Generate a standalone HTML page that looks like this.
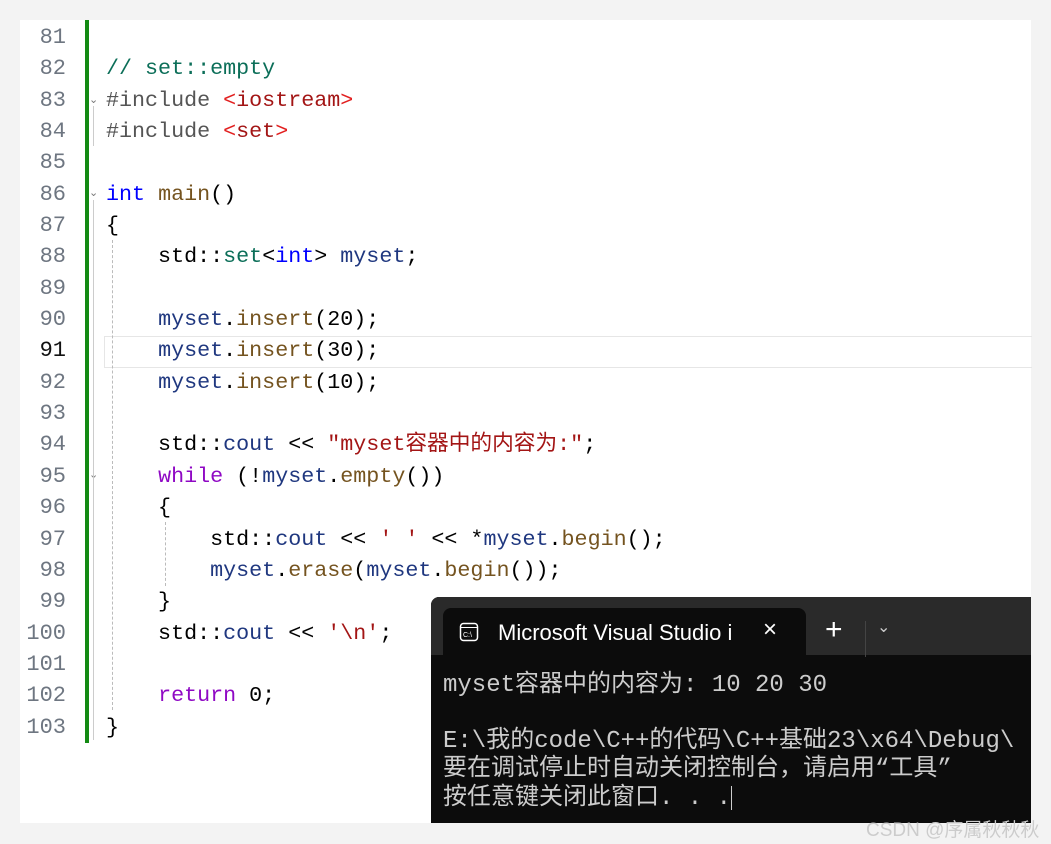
<!DOCTYPE html><html><head><meta charset="utf-8"><style>
body{margin:0;width:1051px;height:844px;background:#f3f3f3;position:relative;overflow:hidden;font-family:"Liberation Mono","Noto Sans CJK SC",monospace}
.card{position:absolute;left:20px;top:20px;width:1011px;height:803px;background:#fff}
.ln{position:absolute;left:20px;width:46px;text-align:right;color:#6e7681;font-size:22px;line-height:31.35px}
.bar{position:absolute;left:85px;top:20px;width:4px;height:723px;background:#138a13}
.code{position:absolute;left:106px;top:22px;font-size:21.7px;line-height:31.35px;white-space:pre;color:#000}
.c{color:#0b6e58}.k{color:#0000ff}.p{color:#8f08c4}.s{color:#a31515}.r{color:#e21f1f}.f{color:#74531f}.v{color:#1f377f}
.cur{position:absolute;left:104px;top:336px;width:927px;height:30px;border:1px solid #e6e6e6;border-right:none}
.fold{position:absolute;left:89px;color:#777;font-size:11px;font-family:"DejaVu Sans"}
.g{position:absolute;border-left:1px dashed #bbb}
.term{position:absolute;left:431px;top:597px;width:600px;height:226px;background:#0c0c0c;border-radius:8px 0 0 0;overflow:hidden}
.tabbar{position:absolute;left:0;top:0;width:600px;height:58px;background:#2a2a2a}
.tab{position:absolute;left:12px;top:11px;width:363px;height:50px;background:#0c0c0c;border-radius:8px 8px 0 0;color:#fff;font-family:"Liberation Sans","DejaVu Sans",sans-serif;font-size:22px}
.tt{position:absolute;font-family:"Liberation Mono","Noto Sans CJK SC",monospace;color:#ccc;font-size:24px;white-space:pre;left:12px;line-height:28px}
</style></head><body>
<div class="card"></div>
<div class="cur"></div>
<div class="ln" style="top:22px">81<br>82<br>83<br>84<br>85<br>86<br>87<br>88<br>89<br>90<br><span style="color:#111">91</span><br>92<br>93<br>94<br>95<br>96<br>97<br>98<br>99<br>100<br>101<br>102<br>103</div>
<div class="bar"></div>
<div class="fold" style="top:93px">⌄</div>
<div class="fold" style="top:186px">⌄</div>
<div class="fold" style="top:468px">⌄</div>
<div class="g" style="left:93px;top:106px;height:40px;border-left-style:solid;border-color:#ccc"></div>
<div class="g" style="left:93px;top:200px;height:540px;border-left-style:solid;border-color:#ccc"></div>
<div class="g" style="left:112px;top:240px;height:470px"></div>
<div class="g" style="left:165px;top:522px;height:64px"></div>
<div class="code">
<span class="c">// set::empty</span>
<span style="color:#555">#include</span> <span class="r">&lt;</span><span class="s">iostream</span><span class="r">&gt;</span>
<span style="color:#555">#include</span> <span class="r">&lt;</span><span class="s">set</span><span class="r">&gt;</span>

<span class="k">int</span> <span class="f">main</span>()
{
    std::<span class="c">set</span>&lt;<span class="k">int</span>&gt; <span class="v">myset</span>;

    <span class="v">myset</span>.<span class="f">insert</span>(20);
    <span class="v">myset</span>.<span class="f">insert</span>(30);
    <span class="v">myset</span>.<span class="f">insert</span>(10);

    std::<span class="v">cout</span> &lt;&lt; <span class="s">"myset容器中的内容为:"</span>;
    <span class="p">while</span> (!<span class="v">myset</span>.<span class="f">empty</span>())
    {
        std::<span class="v">cout</span> &lt;&lt; <span class="s">' '</span> &lt;&lt; *<span class="v">myset</span>.<span class="f">begin</span>();
        <span class="v">myset</span>.<span class="f">erase</span>(<span class="v">myset</span>.<span class="f">begin</span>());
    }
    std::<span class="v">cout</span> &lt;&lt; <span class="s">'\n'</span>;

    <span class="p">return</span> 0;
}</div>
<div class="term">
<div class="tabbar"></div>
<div class="tab">
<svg style="position:absolute;left:16px;top:14px" width="20" height="20" viewBox="0 0 20 20"><rect x="1.5" y="1.5" width="17" height="17" rx="3" fill="none" stroke="#fff" stroke-width="1.5"/><line x1="2" y1="5.5" x2="18" y2="5.5" stroke="#fff"/><text x="4" y="15" font-size="7" fill="#fff" font-family="Liberation Sans">C:\</text></svg>
<span style="position:absolute;left:55px;top:12px">Microsoft Visual Studio i</span>
<span style="position:absolute;left:320px;top:8px;font-size:24px">×</span>
</div>
<span style="position:absolute;left:394px;top:18px;color:#fff;font-size:30px;font-family:'Liberation Sans';line-height:1">+</span>
<div style="position:absolute;left:434px;top:24px;width:1px;height:36px;background:#444"></div>
<span style="position:absolute;left:446px;top:20px;color:#ccc;font-size:16px;font-family:'DejaVu Sans'">⌄</span>
<div class="tt" style="top:75px">myset容器中的内容为: 10 20 30</div>
<div class="tt" style="top:131px">E:\我的code\C++的代码\C++基础23\x64\Debug\</div>
<div class="tt" style="top:159px">要在调试停止时自动关闭控制台，请启用“工具”</div>
<div class="tt" style="top:188px">按任意键关闭此窗口. . .<span style="display:inline-block;width:1px;height:24px;background:#ccc;vertical-align:middle"></span></div>
</div>
<div style="position:absolute;left:866px;top:815px;color:#ccc;font-size:19px;font-family:'Liberation Sans','Noto Sans CJK SC',sans-serif">CSDN @序属秋秋秋</div>
</body></html>
